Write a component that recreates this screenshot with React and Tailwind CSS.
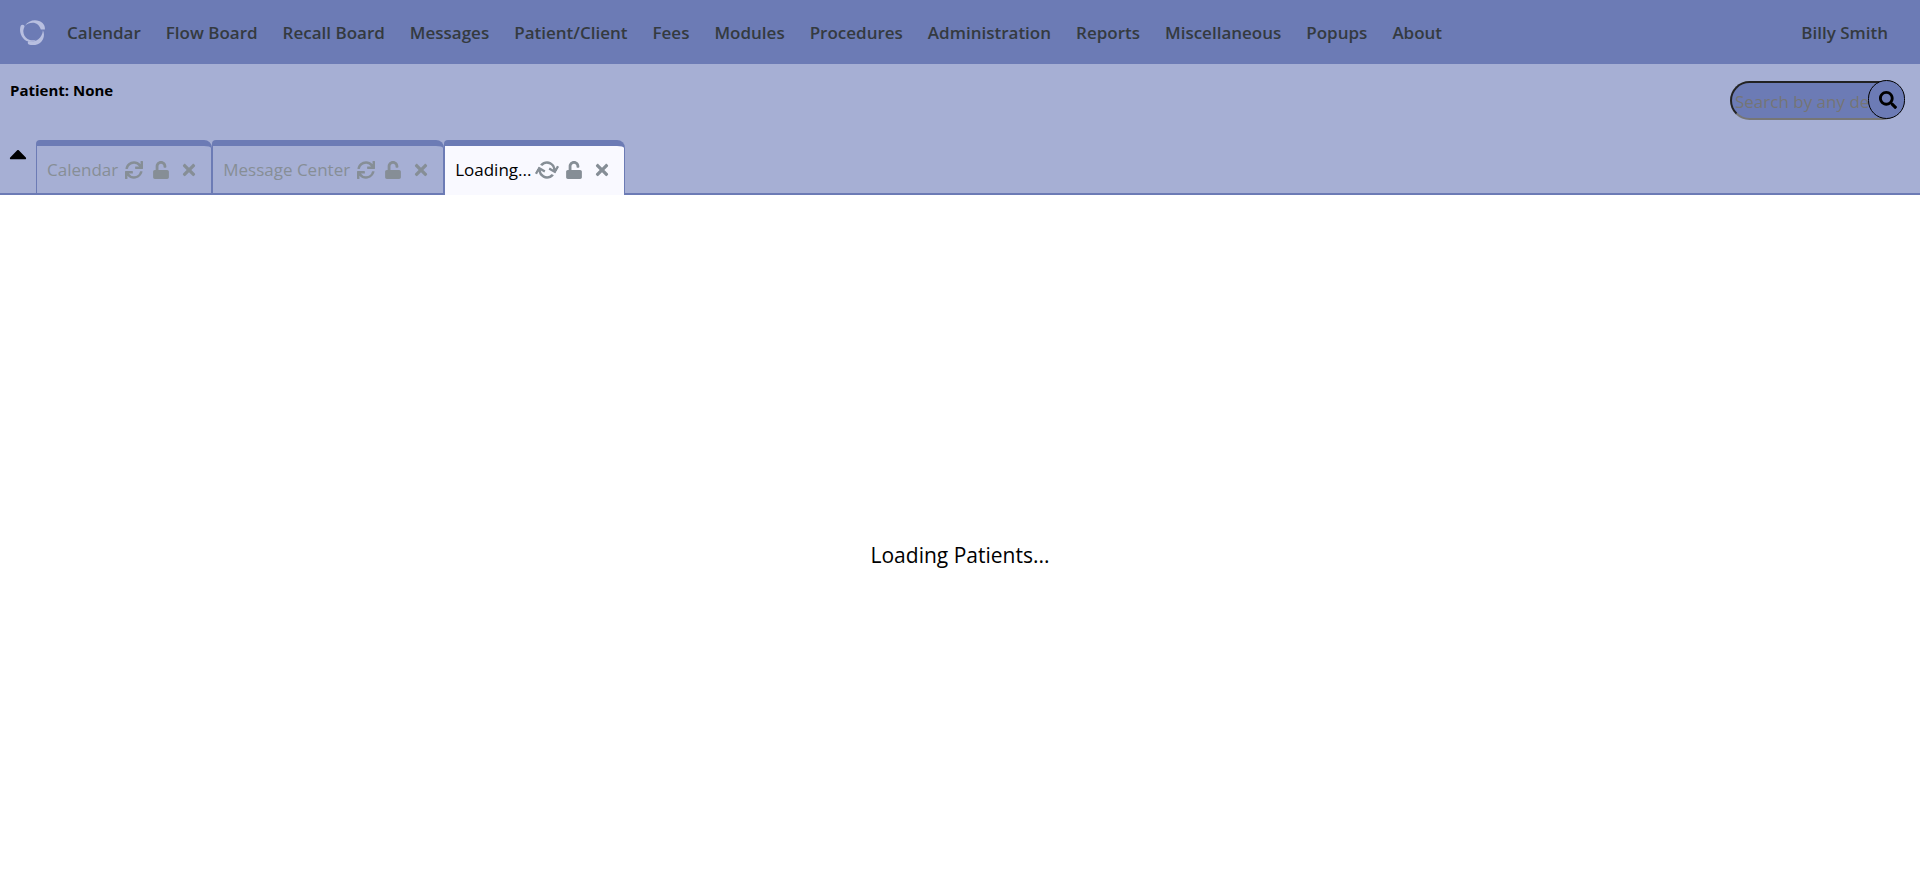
import { FaCaretUp, FaSearch, FaSync, FaTimes, FaUnlock } from "react-icons/fa";

const menu = [
  "Calendar", "Flow Board", "Recall Board", "Messages", "Patient/Client", "Fees", "Modules",
  "Procedures", "Administration", "Reports", "Miscellaneous", "Popups", "About",
];

const tabs = [
  { title: "Calendar" },
  { title: "Message Center" },
  { title: "Loading...", active: true },
];

function Logo() {
  return (
    <svg viewBox="0 0 25 25" className="h-[25px] w-[25px] fill-[#b8bfe0]" aria-hidden="true">
      <path d="M5 5.800C8 .8 14-.8 19 .9 23 2.200 25.200 5.200 24.900 9.400L20.800 9.400C19.600 5.200 16.500 2.700 12.600 2.700 9.600 2.700 7 3.700 5 5.800Z" />
      <path d="M.7 5.800C1.600 4.600 3.200 4.600 4.200 5.400 5 6.200 4.300 7 3.800 8.400 2.400 12.500 4.200 16.800 7.600 18.900 10 20.400 12.800 20.600 16.200 19.700 12 23 6.600 22.300 3.400 18.600-.2 14.600-.6 9.400.7 5.800Z" />
      <path d="M22.900 10.200C25 14.500 24 20 20 23 16.800 25.400 12 25.800 8.400 24.300 7.400 23.400 7.600 21.600 8.700 20.900 11.500 22 15.500 21.300 18.300 19.200 21 17 22.700 14 22.900 10.200Z" />
    </svg>
  );
}

function Tab({ title, active }) {
  return (
    <div
      className={
        active
          ? "flex h-[55px] items-center rounded-tl-[4px] rounded-tr-lg border-x border-t-[6px] border-[#6c7bb5] bg-[#f9f9ff] pr-2 pb-[2px] pl-[10px] text-black"
          : "flex h-[53px] items-center rounded-tl-[4px] rounded-tr-lg border-x border-t-[6px] border-[#6c7bb5] pr-2 pl-[10px] text-[#868e96]"
      }
    >
      <button type="button" className="text-[17px]">{title}</button>
      <div className="ml-[3px] flex items-center text-[18px] text-[#868e96]">
        <button type="button" aria-label={"Refresh " + title} className="grid h-7 w-[26px] place-items-center">
          <FaSync className={active ? "rotate-[30deg]" : ""} />
        </button>
        <button type="button" aria-label={"Unlock " + title} className="grid h-7 w-7 place-items-center">
          <FaUnlock />
        </button>
        <button type="button" aria-label={"Close " + title} className="grid h-7 w-7 place-items-center">
          <FaTimes />
        </button>
      </div>
    </div>
  );
}

export default function App() {
  return (
    <div className="flex min-h-screen flex-col bg-white font-['Open_Sans','Noto_Sans',sans-serif] text-black">
      <header className="flex h-16 items-center bg-[#6c7bb5] pr-8 pl-5 text-[17px] font-semibold text-[#343a40]">
        <a href="#" aria-label="Home"><Logo /></a>
        <nav className="ml-[22px] flex gap-[25px] pt-[2px]">
          {menu.map((item) => (
            <a key={item} href="#" className="whitespace-nowrap">{item}</a>
          ))}
        </nav>
        <a href="#" className="ml-auto pt-[2px] whitespace-nowrap">Billy Smith</a>
      </header>

      <section className="flex h-[131px] flex-col justify-between border-b-2 border-[#6c7bb5] bg-[#a6afd4]">
        <div className="flex items-start justify-between pr-[15px] pl-[10px]">
          <p className="pt-4 text-[15px] leading-5 font-bold">Patient: None</p>
          <form className="mt-4 flex items-start" onSubmit={(e) => e.preventDefault()}>
            <input
              type="text"
              aria-label="Search"
              placeholder="Search by any demographics"
              className="mt-px h-[39px] w-[172px] rounded-[20px] border-2 border-t-[#222] border-r-[#767676] border-b-[#767676] border-l-[#222] bg-[#6c7bb5] pt-[2px] pr-0 pl-[3px] text-[17px] placeholder:text-[#757575]"
            />
            <button
              type="submit"
              aria-label="Run search"
              className="-ml-[34px] grid h-[39px] w-[37px] place-items-center rounded-full border border-black bg-[#6c7bb5] pl-[2px] text-[18px]"
            >
              <FaSearch />
            </button>
          </form>
        </div>
        <div className="-mb-[2px] flex items-start">
          <button type="button" aria-label="Collapse" className="grid h-7 w-9 place-items-center text-[28px]">
            <FaCaretUp />
          </button>
          {tabs.map((tab) => (
            <Tab key={tab.title} {...tab} />
          ))}
        </div>
      </section>

      <main className="grid flex-1 place-items-center pt-7">
        <h1 className="text-[21px] leading-7 font-medium text-black">Loading Patients...</h1>
      </main>
    </div>
  );
}
